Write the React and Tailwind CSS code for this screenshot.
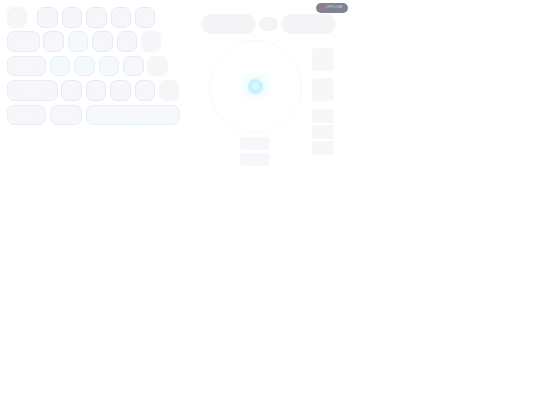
const keyBase = 'flex h-[20.5px] items-center justify-center rounded-[7px] text-[4px] text-[#fbfbfd]';
const borders = {
  none: 'border border-[#f6f6f9] bg-[#f6f6f9]',
  violet: 'border border-[#e9e6f8] bg-[#f7f7fb]',
  pink: 'border border-[#f3e6f8] bg-[#f7f7fb]',
  cyan: 'border border-[#dff4f9] bg-[#f6f9fb]',
};

const rows = [
  [
    { label: 'ESC', w: 'w-5', border: 'none', after: 'mr-[6.5px]' },
    { label: '1', w: 'w-[20.5px]', border: 'violet' },
    { label: '2', w: 'w-[20.5px]', border: 'violet' },
    { label: '3', w: 'w-[20.5px]', border: 'violet' },
    { label: '4', w: 'w-[20.5px]', border: 'violet' },
    { label: '5', w: 'w-[20.5px]', border: 'violet' },
  ],
  [
    { label: 'TAB', w: 'w-[32.5px]', border: 'pink' },
    { label: 'Q', w: 'w-[20.5px]', border: 'violet' },
    { label: 'W', w: 'w-[20.5px]', border: 'cyan' },
    { label: 'E', w: 'w-[20.5px]', border: 'violet' },
    { label: 'R', w: 'w-[20.5px]', border: 'violet' },
    { label: 'T', w: 'w-[20.5px]', border: 'none' },
  ],
  [
    { label: 'CAPS', w: 'w-[39px]', border: 'pink' },
    { label: 'A', w: 'w-[20.5px]', border: 'cyan' },
    { label: 'S', w: 'w-[20.5px]', border: 'cyan' },
    { label: 'D', w: 'w-[20.5px]', border: 'cyan' },
    { label: 'F', w: 'w-[20.5px]', border: 'violet' },
    { label: 'G', w: 'w-[20.5px]', border: 'none' },
  ],
  [
    { label: 'SHIFT', w: 'w-[50.5px]', border: 'pink' },
    { label: 'Z', w: 'w-[20.5px]', border: 'violet' },
    { label: 'X', w: 'w-[20.5px]', border: 'violet' },
    { label: 'C', w: 'w-[20.5px]', border: 'violet' },
    { label: 'V', w: 'w-[20.5px]', border: 'violet' },
    { label: 'B', w: 'w-[20.5px]', border: 'none' },
  ],
  [
    { label: 'CTRL', w: 'w-[39px]', border: 'pink' },
    { label: 'ALT', w: 'w-[32.5px]', border: 'pink' },
    { label: 'SPACE', w: 'w-[94px]', border: 'cyan' },
  ],
];

function Keyboard() {
  return (
    <div className="flex w-[173px] flex-col gap-[3.9px]">
      {rows.map((row, i) => (
        <div key={i} className="flex gap-[3.9px]">
          {row.map((k) => (
            <div key={k.label} className={`${keyBase} ${k.w} ${borders[k.border]} ${k.after || ''}`}>
              {k.label}
            </div>
          ))}
        </div>
      ))}
    </div>
  );
}

function Stick() {
  return (
    <div className="flex h-[93px] w-[93px] items-center justify-center rounded-full border border-[#f5fbfa]">
      <div className="flex h-[15px] w-[15px] items-center justify-center rounded-full bg-[#c8f1fb] shadow-[0_0_8px_4px_#e8fafe]">
        <div className="h-[7px] w-[7px] rounded-full bg-[#d8f6fc]" />
      </div>
    </div>
  );
}

export default function App() {
  return (
    <div className="relative flex h-[405px] w-[540px] items-start gap-[21px] bg-white pl-[7px] pt-[7px] font-['Liberation_Sans',sans-serif]">
      <Keyboard />

      <div className="flex w-[135px] flex-col pt-[7px]">
        <div className="flex items-center gap-[3px]">
          <div className="flex h-5 w-[55px] items-center justify-center rounded-full bg-[#f4f4f7] text-[4px] text-[#fafafc]">SHOOT</div>
          <div className="flex h-[14px] w-[19px] items-center justify-center rounded-full bg-[#f4f4f7] text-[4px] text-[#fafafc]">R</div>
          <div className="flex h-5 w-[55px] items-center justify-center rounded-full bg-[#f4f4f7] text-[4px] text-[#fafafc]">AIM</div>
        </div>

        <div className="mt-[5.5px] flex items-start gap-[10px] pl-[7.5px]">
          <div className="flex flex-col items-center">
            <Stick />
            <div className="mr-[1px] mt-[4.5px] flex flex-col gap-[3px]">
              <div className="h-[13px] w-[29px] rounded-[2px] bg-[#f7f6fa]" />
              <div className="h-[13px] w-[29px] rounded-[2px] bg-[#f7f6fa]" />
            </div>
          </div>

          <div className="mt-[8.5px] flex flex-col">
            <div className="h-[23px] w-[22px] rounded-[4px] bg-[#f6f7f9]" />
            <div className="mt-[7px] h-[23px] w-[22px] rounded-[4px] bg-[#f6f7f9]" />
            <div className="mt-2 h-[14px] w-[22px] rounded-[2px] bg-[#f7f7fa]" />
            <div className="mt-[2px] h-[14px] w-[22px] rounded-[2px] bg-[#f7f7fa]" />
            <div className="mt-[2px] h-[14px] w-[22px] rounded-[2px] bg-[#f7f7fa]" />
          </div>
        </div>
      </div>

      <div className="absolute left-[316px] top-[3px] flex h-[10px] w-[32px] items-center gap-[2px] rounded-full bg-[#7f8493] pl-[4.5px] text-[3.5px] leading-none tracking-[0.3px] text-[#d5d7de]">
        <span className="h-[3.5px] w-[3.5px] rounded-full bg-[#e0606a]" />
        OFFLINE
      </div>
    </div>
  );
}
